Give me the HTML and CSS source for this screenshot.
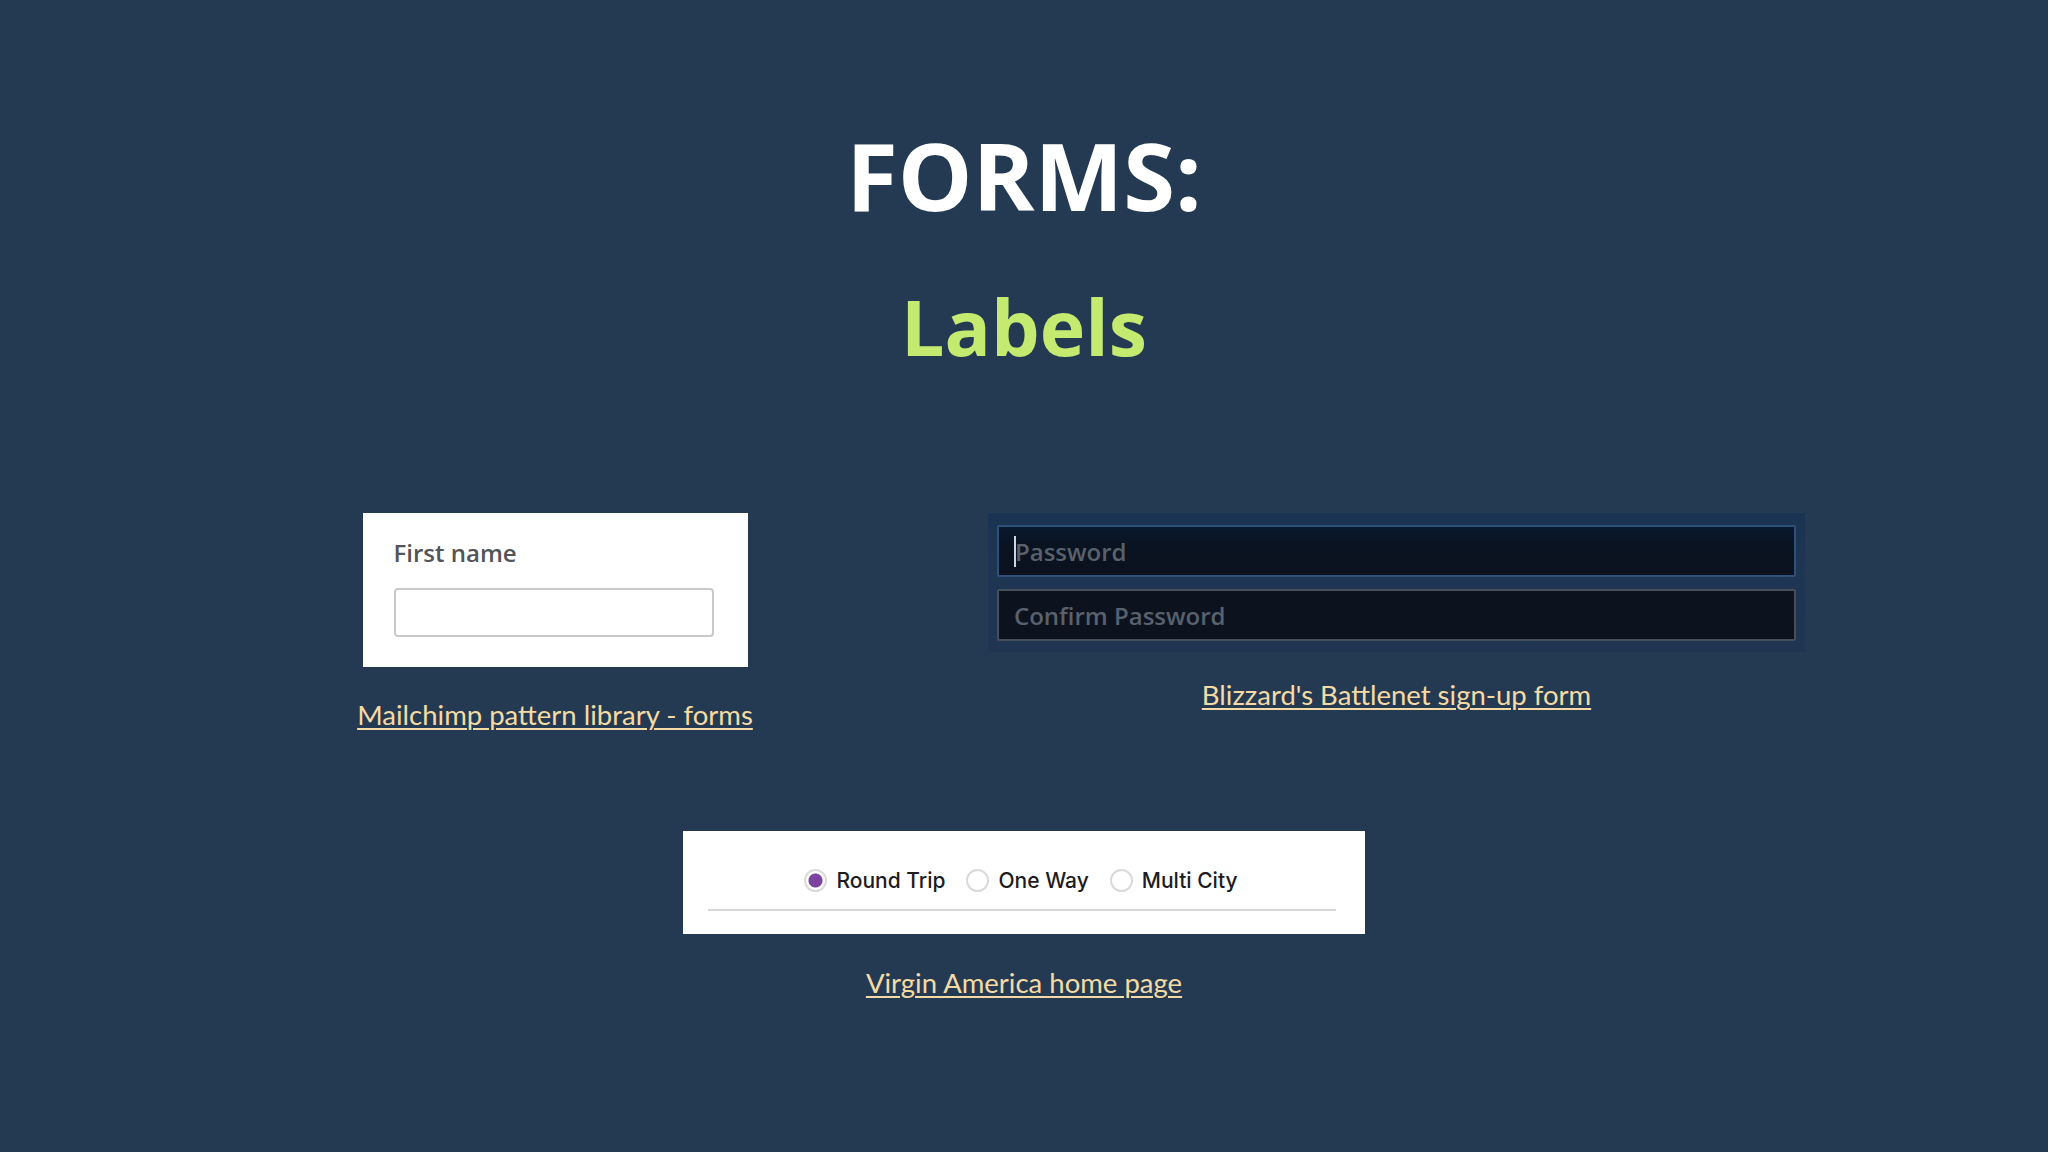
FILE: index.html
```html
<!DOCTYPE html>
<html lang="en">
<head>
<meta charset="utf-8">
<title>Forms: Labels</title>
<link rel="stylesheet" href="styles.css">
</head>
<body>
<main class="slide">
  <h1 class="title">FORMS:</h1>
  <h2 class="subtitle">Labels</h2>

  <section class="examples">
    <div class="example example-left">
      <div class="mc-card">
        <label class="mc-label" for="fname">First name</label>
        <input class="mc-input" id="fname" type="text">
      </div>
      <a class="ref-link link-left" href="#">Mailchimp pattern library - forms</a>
    </div>

    <div class="example example-right">
      <div class="bn-panel">
        <div class="bn-field bn-field-active"><span class="bn-caret"></span><span class="bn-placeholder">Password</span></div>
        <div class="bn-field"><span class="bn-placeholder">Confirm Password</span></div>
      </div>
      <a class="ref-link link-right" href="#">Blizzard's Battlenet sign-up form</a>
    </div>
  </section>

  <section class="example example-center">
    <div class="va-card">
      <div class="va-radios">
        <label class="va-option"><input class="va-radio" type="radio" name="trip" checked><span class="va-text">Round Trip</span></label>
        <label class="va-option"><input class="va-radio" type="radio" name="trip"><span class="va-text">One Way</span></label>
        <label class="va-option"><input class="va-radio" type="radio" name="trip"><span class="va-text">Multi City</span></label>
      </div>
      <div class="va-rule"></div>
    </div>
    <a class="ref-link link-center" href="#">Virgin America home page</a>
  </section>
</main>
</body>
</html>
```

FILE: styles.css
```css
html, body {
  margin: 0;
  padding: 0;
}

body {
  background: #243a53;
  width: 2048px;
  height: 1152px;
  overflow: hidden;
  font-family: "Open Sans", "Liberation Sans", sans-serif;
}

.slide {
  display: flex;
  flex-direction: column;
  align-items: center;
}

.title {
  margin: 128px 0 0 0;
  font-family: "Open Sans", sans-serif;
  font-weight: 700;
  font-size: 94px;
  line-height: 94px;
  color: #ffffff;
}

.subtitle {
  margin: 66px 0 0 0;
  font-family: "Open Sans", sans-serif;
  font-weight: 700;
  font-size: 77px;
  line-height: 77px;
  color: #c5ea70;
}

.examples {
  align-self: stretch;
  display: flex;
  align-items: flex-start;
  gap: 232px;
  margin-top: 148px;
  padding-left: 354px;
}

.example {
  display: flex;
  flex-direction: column;
  align-items: center;
}

.example-left {
  width: 402px;
}

.example-right {
  width: 817px;
}

.ref-link {
  font-family: "Lato", "Liberation Sans", sans-serif;
  font-size: 27.5px;
  line-height: 27.5px;
  color: #f5dba3;
  text-decoration: underline;
  text-decoration-thickness: 2px;
  text-underline-offset: 3px;
  white-space: nowrap;
}

/* Mailchimp */
.mc-card {
  width: 385px;
  box-sizing: border-box;
  background: #ffffff;
  padding: 28px 34px 30px 31px;
  display: flex;
  flex-direction: column;
}

.mc-label {
  font-family: "Open Sans", sans-serif;
  font-weight: 600;
  font-size: 24px;
  line-height: 24px;
  color: #515459;
}

.mc-input {
  margin: 23px 0 0 0;
  width: 320px;
  height: 49px;
  box-sizing: border-box;
  border: 2px solid #c9c9c9;
  border-radius: 4px;
  background: #ffffff;
  padding: 0;
}

.link-left {
  margin-top: 34px;
}

/* Battlenet */
.bn-panel {
  width: 817px;
  box-sizing: border-box;
  padding: 12px 9px 11px 9px;
  background: linear-gradient(180deg, #1b3352 0%, #1e3553 40%, #1f3552 100%);
  display: flex;
  flex-direction: column;
  gap: 12px;
  align-self: stretch;
}

.bn-field {
  height: 52px;
  box-sizing: border-box;
  border: 2px solid #454e5a;
  border-radius: 2px;
  background: #0c131f;
  display: flex;
  align-items: center;
  padding-left: 15px;
}

.bn-field-active {
  border-color: #2f507a;
  background: linear-gradient(180deg, #081a30 0%, #0a1321 35%, #0b121e 100%);
}

.bn-caret {
  display: block;
  width: 2px;
  height: 31px;
  background: #cdd5de;
  margin-right: -1px;
}

.bn-placeholder {
  font-family: "Open Sans", sans-serif;
  font-weight: 600;
  font-size: 24px;
  color: #59616d;
  letter-spacing: 0;
}

.link-right {
  margin-top: 29px;
}

/* Virgin America */
.example-center {
  margin-top: 102px;
}

.va-card {
  width: 682px;
  height: 103px;
  box-sizing: border-box;
  background: #ffffff;
  padding: 38px 29px 0 25px;
  display: flex;
  flex-direction: column;
}

.va-radios {
  height: 24px;
  display: flex;
  justify-content: center;
  align-items: center;
  gap: 21px;
  padding-right: 2px;
}

.va-option {
  display: flex;
  align-items: center;
  gap: 9px;
}

.va-radio {
  appearance: none;
  -webkit-appearance: none;
  margin: 0;
  width: 23px;
  height: 23px;
  box-sizing: border-box;
  border: 2px solid #dadada;
  border-radius: 50%;
  background: #ffffff;
}

.va-radio:checked {
  background: radial-gradient(circle, #7c44a0 0, #7c44a0 6.5px, #ffffff 7.5px);
}

.va-text {
  font-family: "Inter", "Open Sans", sans-serif;
  font-weight: 500;
  font-size: 21px;
  color: #1c1c22;
}

.va-rule {
  margin-top: 16px;
  height: 2px;
  background: #d6d6d6;
}

.link-center {
  margin-top: 35px;
}
```
